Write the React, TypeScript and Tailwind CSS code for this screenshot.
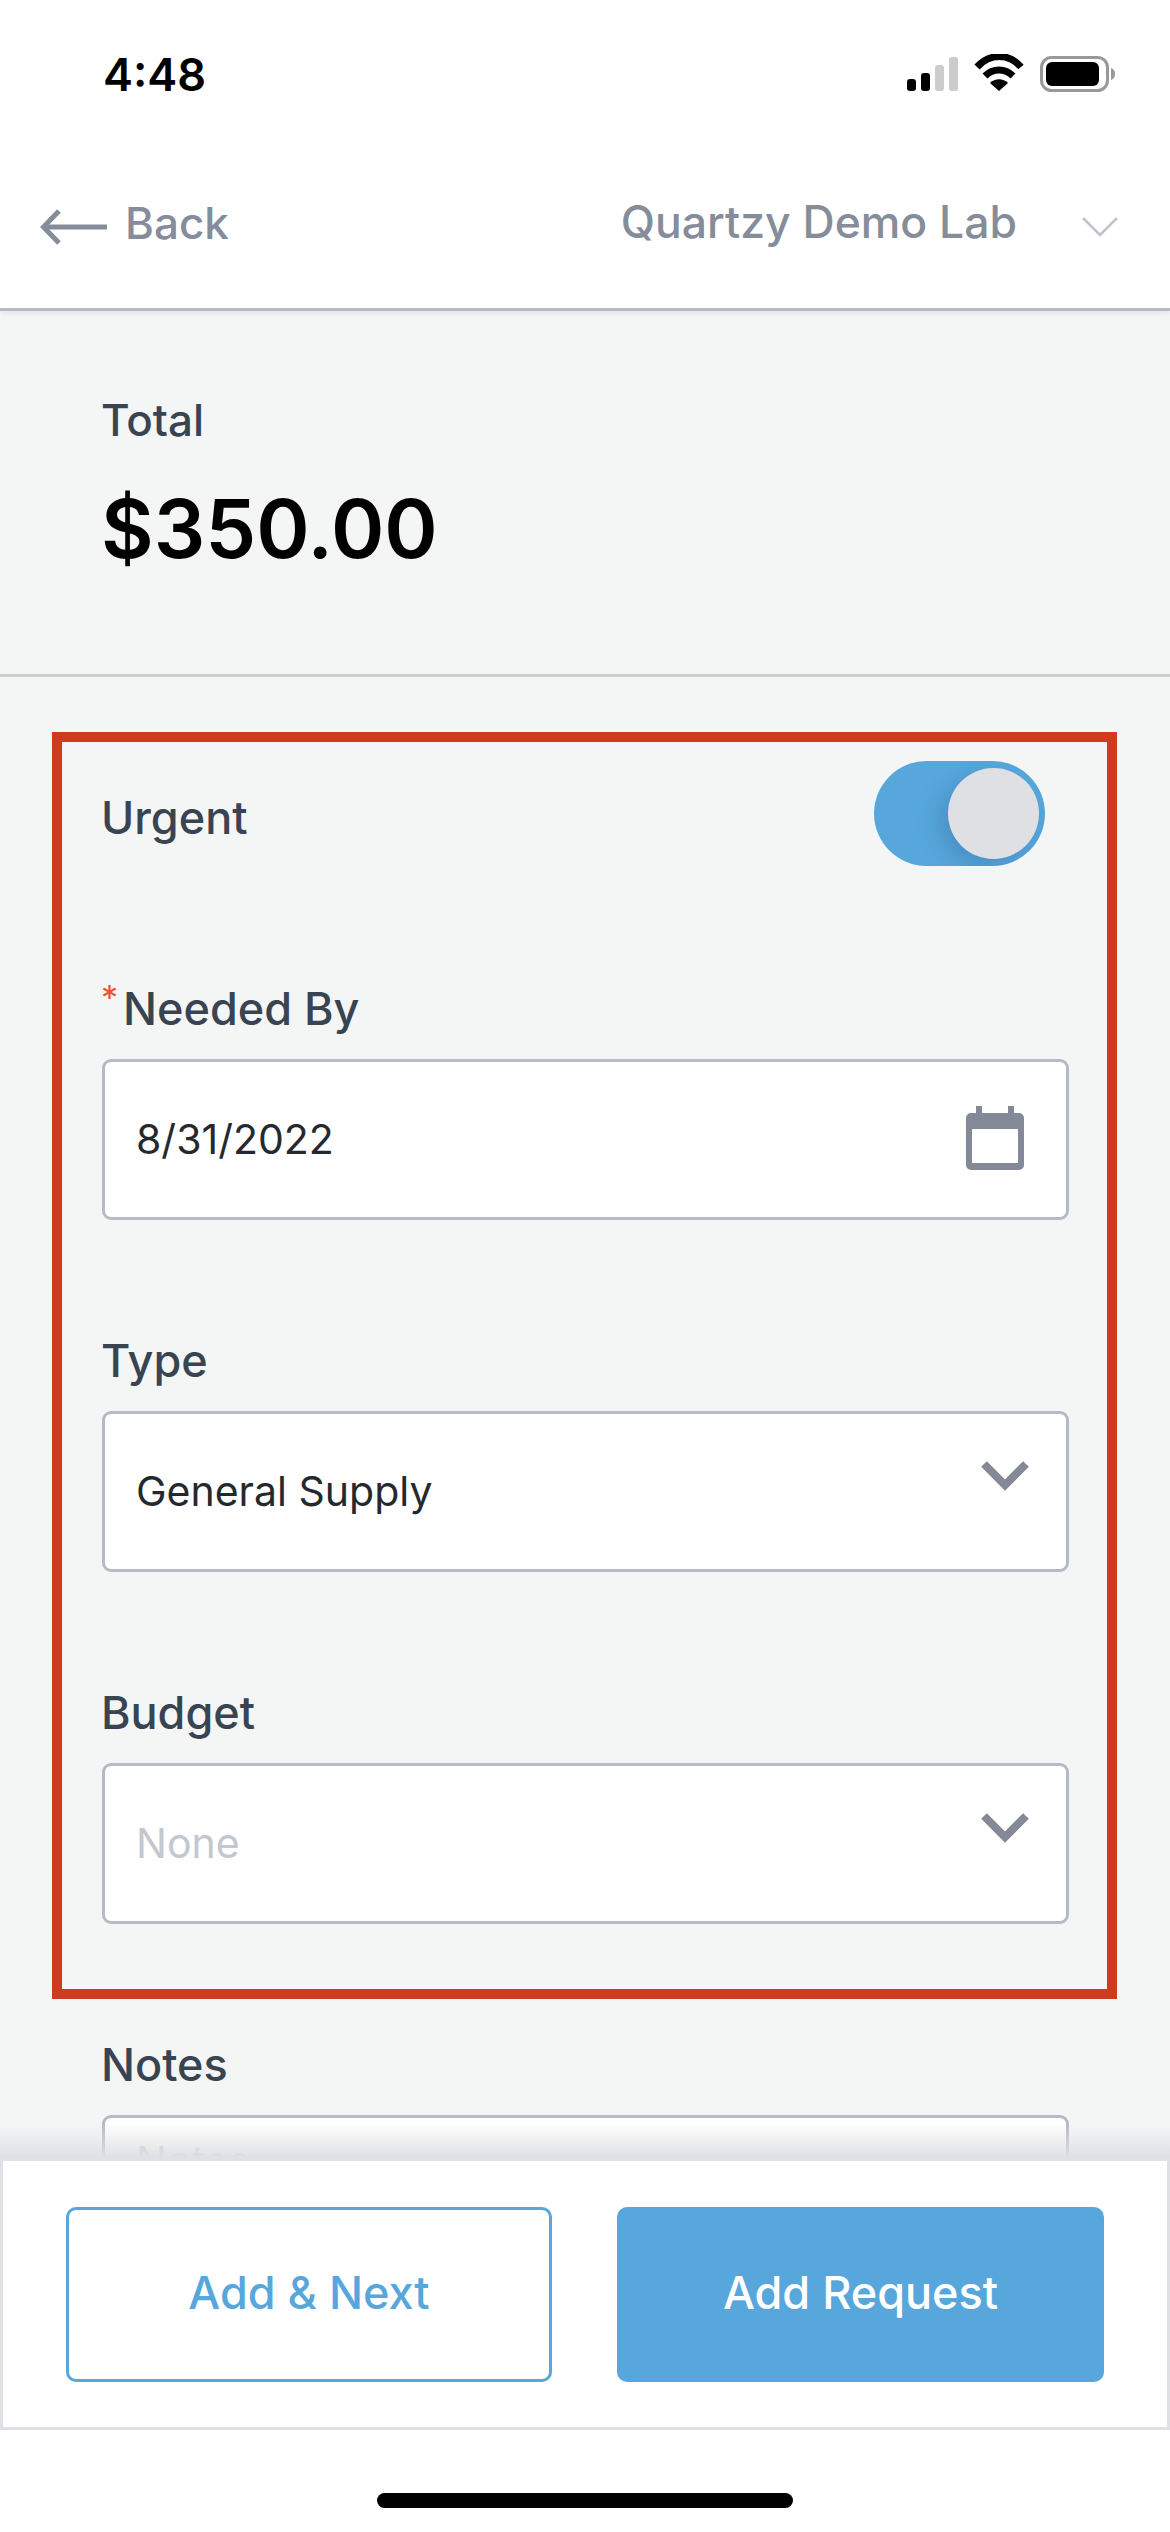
function StatusBar() {
  return (
    <div className="flex h-[135px] items-start justify-between pl-[103px] pr-[55px] pt-[48px]">
      <span className="text-[45px] font-semibold leading-[54px] text-black">4:48</span>
      <svg width="208" height="40" viewBox="0 0 208 40" className="mt-[6px]" fill="none">
        <rect x="0" y="25" width="9" height="12" rx="3" fill="#000" />
        <rect x="14" y="19" width="9" height="18" rx="3" fill="#000" />
        <rect x="28" y="11" width="9" height="26" rx="3" fill="#ccc" />
        <rect x="42" y="3" width="9" height="34" rx="3" fill="#ccc" />
        <path d="M70 13 C83 -1 102 -1 114 13" stroke="#000" strokeWidth="7" />
        <path d="M78 22 C86 14 98 14 106 22" stroke="#000" strokeWidth="7" />
        <path d="M92 37 L83 29 C88 24 96 24 101 29 Z" fill="#000" />
        <rect x="134.5" y="3.5" width="66" height="33" rx="10" stroke="#999" strokeWidth="3" />
        <rect x="139" y="8" width="53" height="24" rx="6" fill="#000" />
        <path d="M204 14 C207 15 208 17 208 20 C208 23 207 25 204 26 Z" fill="#999" />
      </svg>
    </div>
  );
}

function NavBar() {
  return (
    <div className="relative z-10 flex h-[176px] items-center justify-between border-b-[3px] border-[#b6bac5] bg-white pl-[40px] pr-[52px] pt-[10px] shadow-[0_3px_5px_rgba(0,0,0,0.06)]">
      <div className="flex items-center gap-[18px]">
        <svg width="67" height="36" viewBox="0 0 67 36" fill="none" stroke="#858c9a" strokeWidth="5">
          <path d="M67 18 H4" />
          <path d="M19 2 L3.5 18 L19 34" />
        </svg>
        <span className="mb-[8px] text-[44px] font-medium leading-none text-[#858c9a]">Back</span>
      </div>
      <div className="flex items-center gap-[65px]">
        <span className="mb-[8px] text-[44.5px] font-medium leading-none text-[#858c9a]">Quartzy Demo Lab</span>
        <svg width="36" height="20" viewBox="0 0 36 20" fill="none" stroke="#bfc4cc" strokeWidth="2.5">
          <path d="M1 1 L18 18 L35 1" />
        </svg>
      </div>
    </div>
  );
}

function Label({ children }: { children: React.ReactNode }) {
  return <div className="-ml-[1px] flex h-[60px] items-center text-[45px] font-medium leading-none text-[#394452]">{children}</div>;
}

function SelectField({ label, value, muted }: { label: string; value: string; muted?: boolean }) {
  return (
    <div>
      <div className="mb-[21px]">
        <Label>{label}</Label>
      </div>
      <div className="flex h-[161px] items-center justify-between rounded-[9px] border-[3px] border-[#b6bac5] bg-white pl-[31px] pr-[37px]">
        <span className={`text-[41px] leading-none ${muted ? "text-[#c3c7cf]" : "text-[#24292f]"}`}>{value}</span>
        <svg width="48" height="30" viewBox="0 0 48 30" fill="none" stroke="#838997" strokeWidth="8" className="mb-[31px]">
          <path d="M3 3 L24 24 L45 3" />
        </svg>
      </div>
    </div>
  );
}

export default function App() {
  return (
    <div className="flex h-[2532px] w-[1170px] flex-col overflow-hidden bg-white font-['Inter',sans-serif]">
      <StatusBar />
      <NavBar />

      <div className="relative flex-1 overflow-hidden bg-[#f4f6f6]">
        <div className="flex h-[366px] flex-col border-b-[3px] border-[#cdd0d2] pl-[101px] pt-[79px]">
          <div className="text-[44px] font-medium leading-[60px] text-[#394452]">Total</div>
          <div className="mt-[29px] text-[81px] font-semibold leading-[100px] text-black">$350.00</div>
        </div>

        <div className="ml-[52px] mt-[55px] flex w-[1065px] flex-col gap-[110px] border-[10px] border-[#d03a20] pb-[65px] pl-[40px] pr-[38px] pt-[19px]">
          <div className="flex items-center justify-between pb-[2px] pr-[24px]">
            <div className="pt-[7px]">
              <Label>Urgent</Label>
            </div>
            <div className="flex h-[105px] w-[171px] items-center justify-end overflow-hidden rounded-full bg-[#57a7dd] pr-[6px]">
              <div className="h-[91px] w-[91px] rounded-full bg-[#dfe0e4] shadow-[-8px_8px_22px_rgba(40,90,140,0.3)]" />
            </div>
          </div>

          <div>
            <div className="mb-[21px]">
              <Label>
                <span className="mt-[3px] w-[22px] self-start text-[34px] font-normal leading-[34px] text-[#e8542c]">*</span>
                Needed By
              </Label>
            </div>
            <div className="flex h-[161px] items-center justify-between rounded-[9px] border-[3px] border-[#b6bac5] bg-white pl-[31px] pr-[42px]">
              <span className="text-[41px] leading-none text-[#24292f]">8/31/2022</span>
              <svg width="58" height="64" viewBox="0 0 58 64" className="mb-[3px]">
                <rect x="10" y="0" width="6" height="10" fill="#838997" />
                <rect x="42" y="0" width="6" height="10" fill="#838997" />
                <path fillRule="evenodd" clipRule="evenodd" d="M5 7 H53 a5 5 0 0 1 5 5 V59 a5 5 0 0 1 -5 5 H5 a5 5 0 0 1 -5 -5 V12 a5 5 0 0 1 5 -5 Z M6 23 V57 H52 V23 Z" fill="#838997" />
              </svg>
            </div>
          </div>

          <SelectField label="Type" value="General Supply" />
          <SelectField label="Budget" value="None" muted />
        </div>

        <div className="ml-[102px] mt-[35px] w-[967px]">
          <div className="mb-[21px]">
            <Label>Notes</Label>
          </div>
          <div className="h-[160px] rounded-[9px] border-[3px] border-[#b6bac5] bg-white pl-[31px] pt-[13px]">
            <span className="text-[41px] leading-[60px] text-[#c3c7cf]">Notes</span>
          </div>
        </div>

        <div className="absolute inset-x-0 bottom-0 h-[34px] bg-gradient-to-b from-transparent to-[#dfe0e4]" />
      </div>

      <div className="flex h-[272px] items-start justify-between border-[3px] border-[#e0e1e6] bg-white pl-[63px] pr-[63px] pt-[46px]">
        <div className="flex h-[175px] w-[486px] items-center justify-center rounded-[10px] border-[3px] border-[#57a7dd] pb-[4px] text-[45px] font-medium text-[#57a7dd]">Add &amp; Next</div>
        <div className="flex h-[175px] w-[487px] items-center justify-center rounded-[10px] bg-[#57a7dd] pb-[4px] text-[45px] font-medium text-white">Add Request</div>
      </div>

      <div className="flex h-[102px] items-start justify-center pt-[63px]">
        <div className="h-[15px] w-[416px] rounded-full bg-black" />
      </div>
    </div>
  );
}
